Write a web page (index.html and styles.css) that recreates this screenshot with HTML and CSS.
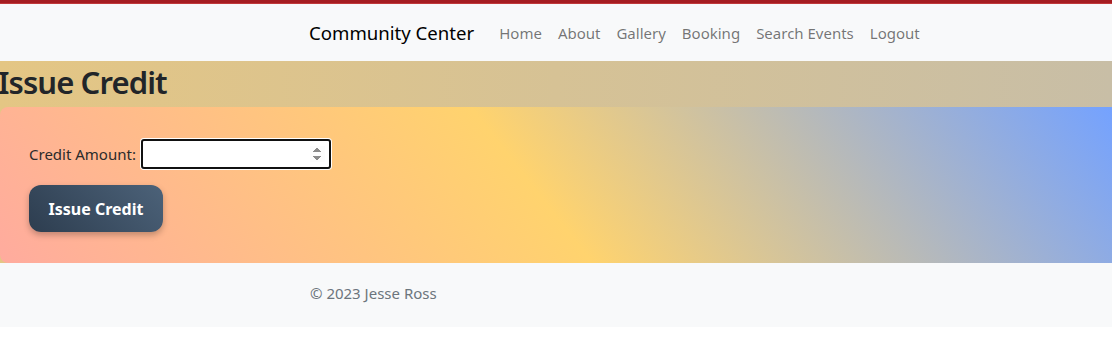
FILE: index.html
```html
<!DOCTYPE html>
<html lang="en">
  <head>
    <meta charset="UTF-8" />
    <meta name="viewport" content="width=device-width, initial-scale=1.0" />
    <title>Issue Credit - Community Center</title>
    <link rel="stylesheet" href="styles.css">
  </head>
  <body>
    <div class="topbar"></div>
    <nav class="navbar">
      <div class="nav-inner">
        <a class="brand" href="#">Community Center</a>
        <ul class="nav-links">
          <li><a href="#">Home</a></li>
          <li><a href="#">About</a></li>
          <li><a href="#">Gallery</a></li>
          <li><a href="#">Booking</a></li>
          <li><a href="#">Search Events</a></li>
          <li><a href="#">Logout</a></li>
        </ul>
      </div>
    </nav>

    <main class="page">
      <h1 class="page-title">Issue Credit</h1>
      <form class="credit-form">
        <div class="field">
          <label for="amount">Credit Amount:</label>
          <input type="number" id="amount" name="amount" autofocus />
        </div>
        <button type="submit" class="btn-issue">Issue Credit</button>
      </form>
    </main>

    <footer class="footer">
      <div class="footer-inner">&copy; 2023 Jesse Ross</div>
    </footer>
  </body>
</html>
```

FILE: styles.css
```css
* {
  box-sizing: border-box;
}

body {
  margin: 0;
  font-family: "Noto Sans", "Open Sans", sans-serif;
  color: #212529;
  background: #fff;
}

.topbar {
  height: 4px;
  background-color: #a51d21;
  border-bottom: 1px solid #c0383a;
}

.navbar {
  background-color: #f8f9fa;
  height: 57px;
  display: flex;
  align-items: center;
}

.nav-inner {
  display: flex;
  align-items: center;
  padding-left: 309px;
}

.brand {
  font-size: 18.6px;
  color: #000;
  text-decoration: none;
  margin-right: 17px;
}

.nav-links {
  display: flex;
  list-style: none;
  margin: 0;
  padding: 0;
}

.nav-links a {
  display: block;
  padding: 8px 8px;
  font-size: 15px;
  color: rgba(0, 0, 0, 0.55);
  text-decoration: none;
}

.page {
  background: linear-gradient(to right, #e4c684, #c8bea6);
}

.page-title {
  margin: 0 0 0 -2px;
  height: 46px;
  line-height: 42px;
  font-size: 31px;
  font-weight: 600;
  letter-spacing: -0.9px;
}

.credit-form {
  height: 156px;
  padding: 32px 29px 0;
  border-radius: 8px 0 0 8px;
  background: linear-gradient(52deg, #ffab9e 0%, #ffd36e 48%, #74a2ff 100%);
}

.field {
  display: flex;
  align-items: center;
  gap: 5px;
}

.field label {
  font-size: 15px;
  color: #2b2b2b;
}

.field input {
  width: 190px;
  height: 30px;
  border: 2px solid #111;
  border-radius: 3px;
  box-shadow: 0 0 0 1px #fff;
  outline: none;
  font-size: 15px;
  padding: 2px 4px;
}

.btn-issue {
  margin-top: 16px;
  width: 134px;
  height: 47px;
  border: none;
  border-radius: 12px;
  background: linear-gradient(45deg, #2d3d4f, #4c6279);
  color: #fff;
  font-family: inherit;
  font-size: 16px;
  font-weight: 700;
  box-shadow: 0 3px 6px rgba(0, 0, 0, 0.25);
  cursor: pointer;
}

.footer {
  background-color: #f8f9fa;
  height: 64px;
  display: flex;
  align-items: center;
  padding-bottom: 5px;
}

.footer-inner {
  padding-left: 310px;
  font-size: 15px;
  color: #6c757d;
}
```
